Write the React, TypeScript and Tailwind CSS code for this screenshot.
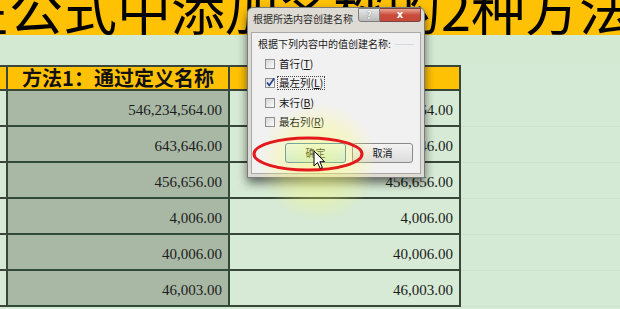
import React from 'react';

const rows: [string, string][] = [
  ['546,234,564.00', '546,234,564.00'],
  ['643,646.00', '643,646.00'],
  ['456,656.00', '456,656.00'],
  ['4,006.00', '4,006.00'],
  ['40,006.00', '40,006.00'],
  ['46,003.00', '46,003.00'],
];

function CheckBox({ checked }: { checked?: boolean }) {
  return (
    <div className="relative w-[10px] h-[10px] border border-[#8e8f8f] bg-gradient-to-br from-[#d8d8d8] to-[#fbfbfb] shrink-0">
      {checked && (
        <svg className="absolute left-[-1px] top-[-2px]" width="11" height="11" viewBox="0 0 11 11">
          <path d="M2 5.5 L4.3 8.5 L9 1.5" stroke="#1e3f8f" strokeWidth="1.6" fill="none" />
        </svg>
      )}
    </div>
  );
}

function Opt({ label, acc, checked, focus }: { label: string; acc: string; checked?: boolean; focus?: boolean }) {
  return (
    <div className="h-[19.5px] flex items-center pl-[7px]">
      <CheckBox checked={checked} />
      <span
        className={
          'text-[10.5px] leading-[12px] text-[#111] ' +
          (focus ? 'ml-[3px] outline outline-1 outline-dotted outline-[#444] px-[1px]' : 'ml-[4px]')
        }
      >
        {label}(<span className="underline">{acc}</span>)
      </span>
    </div>
  );
}

export default function App() {
  return (
    <div className="relative w-[620px] h-[309px] overflow-hidden bg-[#d5ead4] font-['Noto_Sans_CJK_SC',sans-serif]">
      {/* title band */}
      <div className="h-[35px] bg-[#fec104] overflow-hidden whitespace-nowrap">
        <div className="ml-[-45px] mt-[-19px] text-[54px] leading-[54px] text-black font-['Noto_Sans_CJK_SC',sans-serif]">
          在公式中添加名称的2种方法
        </div>
      </div>
      {/* empty green band */}
      <div className="h-[30px] bg-[#d3e9d2]" />
      {/* table */}
      <div className="flex flex-col">
        <div className="flex h-[26px]">
          <div className="w-[8px] bg-[#fec104] border-t-2 border-b-2 border-r-2 border-[#3a463a]" />
          <div className="w-[222px] bg-[#fec104] border-t-2 border-b-2 border-r-2 border-[#3a463a] flex items-center justify-center text-[20px] leading-[22px] font-bold text-[#111] font-['Noto_Sans_CJK_SC',serif]">
            方法1：通过定义名称
          </div>
          <div className="w-[231px] bg-[#fec104] border-t-2 border-b-2 border-r-2 border-[#3a463a]" />
          <div className="flex-1" />
        </div>
        {rows.map(([b, c], i) => (
          <div key={i} className="flex h-[36px] font-['Liberation_Serif',serif] text-[15px] leading-[17px] text-[#1c1c1c]">
            <div className="w-[8px] bg-[#d6ead5] border-b-2 border-r-2 border-[#3a463a]" />
            <div className="w-[222px] bg-[#a8b8a5] border-b-2 border-r-2 border-[#2f4a36] flex items-center justify-end pr-[6px] pt-[4px]">
              {b}
            </div>
            <div className="w-[231px] bg-[#d6ead5] border-b-2 border-r-2 border-[#3a463a] flex items-center justify-end pr-[6px] pt-[4px]">
              {c}
            </div>
            <div className="flex-1 border-b border-[#cfe1cd]" />
          </div>
        ))}
      </div>

      {/* dialog */}
      <div className="absolute left-[247px] top-[7px] w-[178px] h-[171px] rounded-t-[6px] border border-[#7b7b7b] bg-[#dedbd4] shadow-[0_5px_10px_rgba(0,0,0,0.55)] flex flex-col">
        <div className="h-[24px] flex items-start shrink-0">
          <span className="ml-[5px] mt-[5px] text-[10px] leading-[12px] text-[#2a2a2a]">根据所选内容创建名称</span>
          <div className="ml-auto mr-[3px] flex">
            <div className="w-[22px] h-[14px] rounded-bl-[3px] border border-[#7d7d7d] bg-gradient-to-b from-[#e8e8e8] to-[#b9b9b9] flex items-center justify-center text-[10px] leading-[10px] font-bold text-white [text-shadow:0_0_1px_#444]">
              ?
            </div>
            <div className="w-[41px] h-[14px] rounded-br-[3px] border border-l-0 border-[#7d4040] bg-gradient-to-b from-[#e8a393] via-[#c94b3b] to-[#c44a3a] flex items-center justify-center text-[10px] leading-[10px] font-bold text-white font-['DejaVu_Sans',sans-serif]">
              x
            </div>
          </div>
        </div>
        <div className="mx-[3px] mb-[3px] flex-1 bg-[#f1f1f1] border border-[#a9a9a9] flex flex-col px-[6px]">
          <div className="pt-[5px] flex items-center">
            <span className="text-[10px] leading-[12px] text-[#1a1a1a] whitespace-nowrap">根据下列内容中的值创建名称:</span>
            <div className="flex-1 h-px bg-[#d5d9dd] ml-[4px]" />
          </div>
          <div className="mt-[4px] flex flex-col">
            <Opt label="首行" acc="T" />
            <Opt label="最左列" acc="L" checked focus />
            <Opt label="末行" acc="B" />
            <Opt label="最右列" acc="R" />
          </div>
          <div className="mt-[11px] flex gap-[6px] pl-[27px]">
            <div className="w-[61px] h-[20px] rounded-[3px] border border-[#3c7fb1] bg-gradient-to-b from-[#eaf6fd] to-[#c4e6ef] flex items-center justify-center text-[10px] leading-[12px] text-[#111]">
              确定
            </div>
            <div className="w-[61px] h-[20px] rounded-[3px] border border-[#8a8a8a] bg-gradient-to-b from-[#f4f4f4] to-[#dcdcdc] flex items-center justify-center text-[10px] leading-[12px] text-[#111]">
              取消
            </div>
          </div>
        </div>
      </div>

      {/* cursor glow */}
      <div className="absolute left-[258px] top-[102px] w-[120px] h-[120px] rounded-full bg-[radial-gradient(circle,rgba(255,255,80,0.45)_0%,rgba(255,255,100,0.25)_45%,rgba(255,255,120,0)_70%)] pointer-events-none" />

      {/* red ellipse */}
      <svg className="absolute left-[250px] top-[134px]" width="116" height="42" viewBox="0 0 116 42">
        <ellipse cx="58" cy="20" rx="54" ry="16" stroke="#e3191b" strokeWidth="3" fill="none" />
      </svg>

      {/* cursor */}
      <svg className="absolute left-[313px] top-[150px]" width="14" height="21" viewBox="0 0 14 21">
        <path d="M1 1 L1 16 L4.5 12.5 L7.2 18.5 L9.4 17.5 L6.8 11.7 L11.5 11.7 Z" fill="#fff" stroke="#000" strokeWidth="1" strokeLinejoin="round" />
      </svg>
    </div>
  );
}
